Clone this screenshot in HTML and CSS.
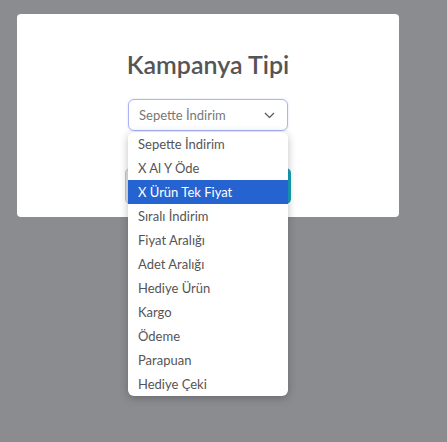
FILE: index.html
```html
<!DOCTYPE html>
<html lang="tr">
<head>
  <meta charset="UTF-8">
  <meta name="viewport" content="width=device-width, initial-scale=1.0">
  <title>Kampanya Tipi</title>
  <link rel="stylesheet" href="styles.css">
</head>
<body>
  <div class="modal">
    <h2 class="baslik">Kampanya Tipi</h2>
    <div class="alan">
      <div class="secim">
        <span>Sepette İndirim</span>
        <svg class="ok" width="11" height="7" viewBox="0 0 11 7"><path d="M1 1l4.5 4.5L10 1" fill="none" stroke="#555" stroke-width="1.2"/></svg>
      </div>
      <ul class="liste">
        <li>Sepette İndirim</li>
        <li>X Al Y Öde</li>
        <li class="secili">X Ürün Tek Fiyat</li>
        <li>Sıralı İndirim</li>
        <li>Fiyat Aralığı</li>
        <li>Adet Aralığı</li>
        <li>Hediye Ürün</li>
        <li>Kargo</li>
        <li>Ödeme</li>
        <li>Parapuan</li>
        <li>Hediye Çeki</li>
      </ul>
    </div>
    <!-- butonlar listenin altinda kaliyor -->
    <div class="butonlar">
      <button type="button" class="btn geri" aria-label="Geri"></button>
      <button type="button" class="btn ileri" aria-label="İleri"></button>
    </div>
  </div>
</body>
</html>
```

FILE: styles.css
```css
body {
  font-family: 'Lato', 'Noto Sans', sans-serif;
  margin: 0;
  padding: 0;
  background: #8b8c90;
  color: #555;
  height: 442px;
  overflow: hidden;
}
.modal {
  margin: 14px 0 0 17px;
  width: 382px;
  height: 203px;
  background: #fff;
  border-radius: 4px;
  box-sizing: border-box;
  padding-top: 35px;
}
.baslik {
  margin: 0;
  text-align: center;
  font-size: 25px;
  font-weight: 600;
  line-height: 30px;
  color: #555;
}
.alan {
  position: relative;
  width: 160px;
  margin: 20px auto 0;
}
.secim {
  height: 32px;
  box-sizing: border-box;
  border: 1px solid #a9b3f5;
  border-radius: 6px;
  box-shadow: 0 0 2px rgba(120,140,240,0.35);
  display: flex;
  align-items: center;
  justify-content: space-between;
  padding: 0 12px 0 10px;
  font-size: 13px;
  color: #777;
}
.liste {
  position: absolute;
  top: 33px;
  left: 0;
  width: 160px;
  margin: 0;
  padding: 0;
  list-style: none;
  background: #fff;
  border-radius: 6px;
  box-shadow: 0 2px 8px rgba(0,0,0,0.25);
  overflow: hidden;
  z-index: 2;
}
.liste li {
  height: 24px;
  line-height: 24px;
  padding-left: 10px;
  font-size: 13px;
  color: #555;
}
.liste li.secili {
  background: #2563d0;
  color: #fff;
}
.butonlar {
  display: flex;
  gap: 6px;
  width: 166px;
  margin: 37px auto 0;
}
.btn {
  flex: 1;
  height: 36px;
  border: none;
  border-radius: 5px;
}
.geri {
  background: #e4e4e4;
  border: 1px solid #c4c4c4;
}
.ileri {
  background: #17a2b8;
}
```
